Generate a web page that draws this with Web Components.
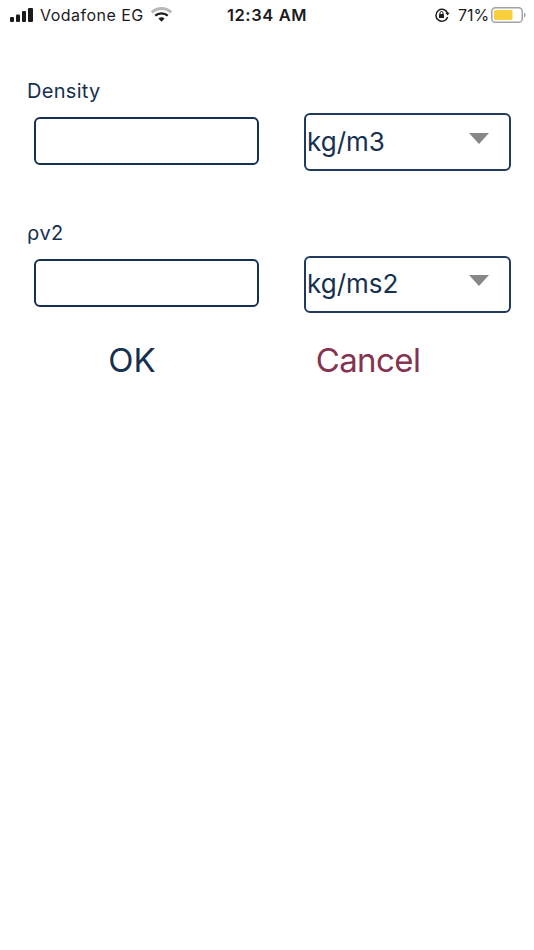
<!DOCTYPE html>
<html>
<head>
<meta charset="utf-8">
<title>Density</title>
<style>
html, body { margin: 0; background: #fff; }
body { width: 534px; height: 950px; overflow: hidden; font-family: Inter, "Liberation Sans", sans-serif; }
</style>
</head>
<body>
<status-bar></status-bar>
<unit-field label="Density" unit="kg/m3" style="margin-top:48px;--row-gap:9px;--row-height:58px"></unit-field>
<unit-field label="ρv2" unit="kg/ms2" style="margin-top:49px;--row-gap:10px;--row-height:57px"></unit-field>
<dialog-actions></dialog-actions>

<script>
class StatusBar extends HTMLElement {
  constructor() {
    super();
    this.attachShadow({ mode: "open" }).innerHTML = `<style>
:host { display: grid; grid-template-columns: 1fr auto 1fr; align-items: center; height: 30px; color: #1c1c1e; font-size: 16px; }
div { display: flex; align-items: center; }
.left { padding-left: 10px; }
.carrier { margin-left: 5px; letter-spacing: .48px; }
.wifi { margin-left: 7px; }
.time { font-weight: 600; font-size: 16.5px; letter-spacing: .6px; }
.right { justify-content: flex-end; padding-right: 8px; }
.pct { margin-left: 8px; letter-spacing: -.1px; }
.batt { margin-left: 2px; }
</style>
<div class="left">
  <svg width="25" height="16" viewBox="0 0 25 16"><g fill="#1c1c1e">
    <rect x="0" y="10" width="4" height="5" rx="1"/><rect x="6" y="7.5" width="4" height="7.5" rx="1"/>
    <rect x="12" y="4" width="4" height="11" rx="1"/><rect x="18" y="1" width="5" height="14" rx="1"/></g></svg>
  <span class="carrier">Vodafone EG</span>
  <svg class="wifi" width="21" height="16" viewBox="0 0 21 16" fill="none">
    <path d="M.8 5.4C6.4.2 14.6.2 20.2 5.4" stroke="#b9b9b9" stroke-width="3"/>
    <path d="M4.2 8.6C7.8 5.6 13.2 5.6 16.8 8.6" stroke="#1c1c1e" stroke-width="2.4"/>
    <path d="M7.4 11.4C9.2 10 11.8 10 13.6 11.4L10.5 14.8Z" fill="#1c1c1e"/>
  </svg>
</div>
<div class="time">12:34 AM</div>
<div class="right">
  <svg width="16" height="16" viewBox="0 0 16 16" fill="none">
    <path d="M13.6 6.2A6 6 0 1 0 13.7 10" stroke="#1c1c1e" stroke-width="1.5"/>
    <path d="M11.4 5.8L15.6 5.8L13.6 8.6Z" fill="#1c1c1e"/>
    <rect x="5" y="7" width="5" height="4" rx=".6" fill="#1c1c1e"/>
    <path d="M6 7V6a1.5 1.5 0 0 1 3 0V7" stroke="#1c1c1e" stroke-width="1"/>
  </svg>
  <span class="pct">71%</span>
  <svg class="batt" width="35" height="16" viewBox="0 0 35 16" fill="none">
    <rect x=".75" y=".75" width="30.5" height="14.5" rx="3.6" stroke="#a3a3a3" stroke-width="1.5"/>
    <rect x="3" y="3" width="18.5" height="10" rx="1.5" fill="#f9cf3f"/>
    <path d="M33 5.5C34.2 6 34.6 7 34.6 8S34.2 10 33 10.5Z" fill="#a3a3a3"/>
  </svg>
</div>`;
  }
}

class UnitField extends HTMLElement {
  constructor() {
    super();
    this.attachShadow({ mode: "open" });
  }
  connectedCallback() {
    this.shadowRoot.innerHTML = `<style>
:host { display: block; color: #16304f; }
label { display: block; margin-left: 27px; font-size: 20px; line-height: 26px; letter-spacing: .3px; }
.row { display: flex; align-items: center; gap: 45px; margin: var(--row-gap, 9px) 0 0 34px; height: var(--row-height, 58px); }
input { box-sizing: border-box; width: 225px; height: 48px; margin: 0 0 3px; border: 2px solid #16304f; border-radius: 6px; background: #fff; outline: none; }
.select { box-sizing: border-box; display: flex; align-items: center; justify-content: space-between; width: 207px; height: 100%; padding: 0 20px 2px 1px; border: 2px solid #1f3a5c; border-radius: 6px; font-size: 26px; }
svg { margin-bottom: 6px; }
</style>
<label>${this.getAttribute("label")}</label>
<div class="row">
  <input type="text">
  <div class="select"><span>${this.getAttribute("unit")}</span>
    <svg width="20" height="11" viewBox="0 0 20 11"><path d="M0 0H20L10 11Z" fill="#878787"/></svg>
  </div>
</div>`;
  }
}

class DialogActions extends HTMLElement {
  constructor() {
    super();
    this.attachShadow({ mode: "open" }).innerHTML = `<style>
:host { display: grid; grid-template-columns: 264px 208px; margin-top: 23px; font-size: 33px; line-height: 48px; text-align: center; }
.ok { color: #16304f; }
.cancel { color: #84344f; letter-spacing: -.6px; }
</style>
<div class="ok">OK</div>
<div class="cancel">Cancel</div>`;
  }
}

customElements.define("status-bar", StatusBar);
customElements.define("unit-field", UnitField);
customElements.define("dialog-actions", DialogActions);
</script>
</body>
</html>
